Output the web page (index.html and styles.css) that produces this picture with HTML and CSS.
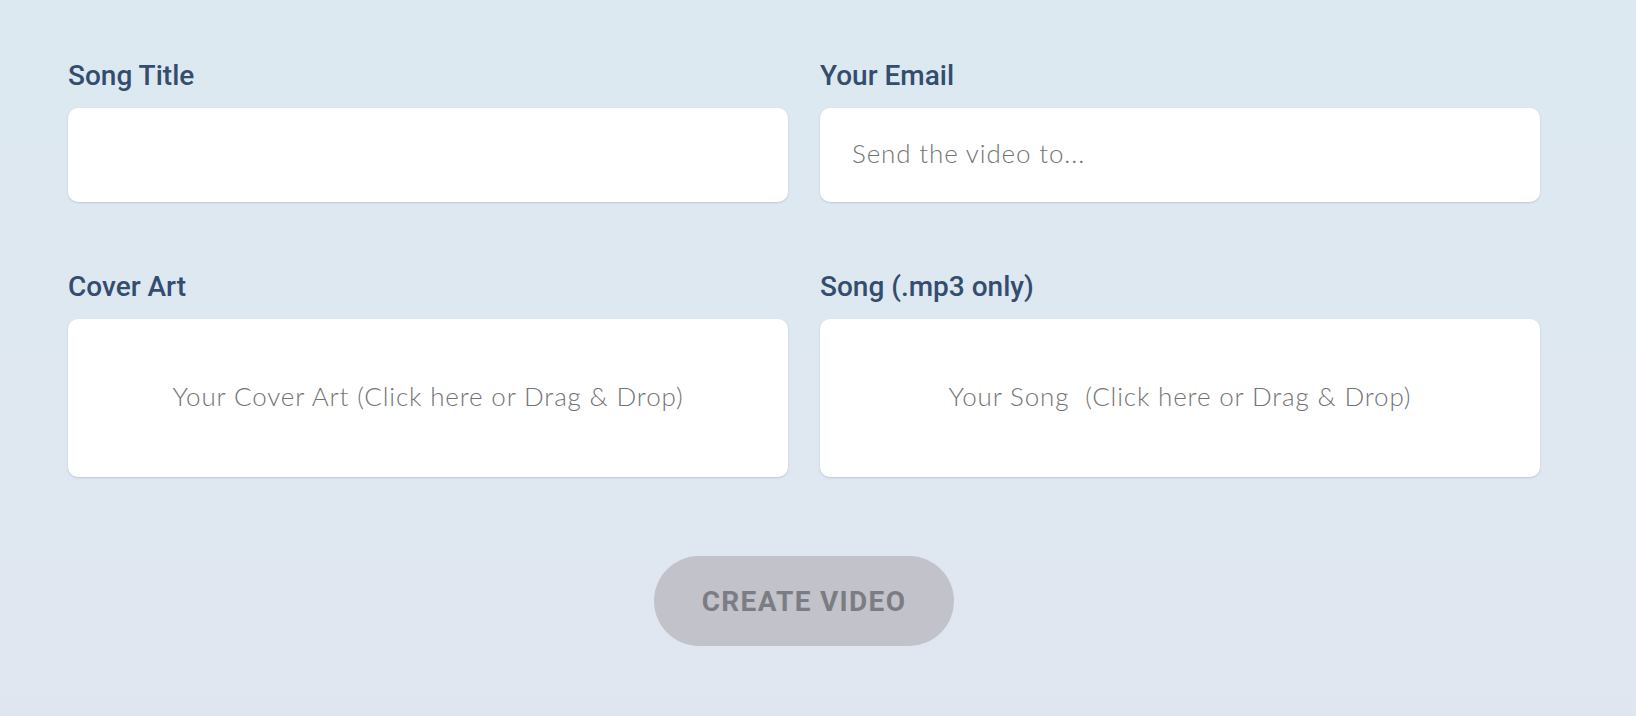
FILE: index.html
```html
<!DOCTYPE html>
<html lang="en">
<head>
<meta charset="utf-8">
<title>Create Video</title>
<link rel="stylesheet" href="styles.css">
</head>
<body>
<main class="page">
  <form class="form">
    <div class="grid">
      <div class="field">
        <label class="label" for="title">Song Title</label>
        <input class="input" id="title" type="text">
      </div>
      <div class="field">
        <label class="label" for="email">Your Email</label>
        <input class="input" id="email" type="email" placeholder="Send the video to...">
      </div>
      <div class="field">
        <span class="label">Cover Art</span>
        <div class="drop">Your Cover Art (Click here or Drag &amp; Drop)</div>
      </div>
      <div class="field">
        <span class="label">Song (.mp3 only)</span>
        <div class="drop">Your Song&nbsp; (Click here or Drag &amp; Drop)</div>
      </div>
    </div>
    <div class="actions">
      <button class="btn" type="button">CREATE VIDEO</button>
    </div>
  </form>
</main>
</body>
</html>
```

FILE: styles.css
```css
html, body {
  margin: 0;
  padding: 0;
}

body {
  min-height: 716px;
  background: linear-gradient(180deg, #dce9f1 0%, #e0e6f0 100%);
  font-family: Roboto, "Liberation Sans", sans-serif;
}

.page {
  padding: 59px 96px 0 68px;
}

.grid {
  display: grid;
  grid-template-columns: 1fr 1fr;
  column-gap: 32px;
  row-gap: 68px;
}

.field {
  display: flex;
  flex-direction: column;
}

.label {
  font-family: Roboto, "Liberation Sans", sans-serif;
  font-weight: 500;
  font-size: 28px;
  line-height: 34px;
  color: #344d6e;
  margin-bottom: 15px;
}

.input,
.drop {
  box-sizing: border-box;
  background: #fff;
  border: none;
  border-radius: 10px;
  box-shadow: 0 1px 2px rgba(90, 110, 140, 0.25);
  font-family: Lato, "Open Sans", sans-serif;
  font-weight: 300;
  font-size: 26px;
  letter-spacing: 0.85px;
  color: #747474;
}

.input {
  height: 94px;
  padding: 0 32px 5px;
  outline: none;
}

.input::placeholder {
  color: #747474;
  opacity: 1;
}

.drop {
  height: 158px;
  padding-bottom: 4px;
  display: flex;
  align-items: center;
  justify-content: center;
}

.actions {
  display: flex;
  justify-content: center;
  padding-top: 79px;
}

.btn {
  width: 300px;
  height: 90px;
  border: none;
  border-radius: 45px;
  background: #c1c2ca;
  color: #7c7d82;
  font-family: Roboto, "Liberation Sans", sans-serif;
  font-weight: 700;
  font-size: 28px;
  letter-spacing: 1.3px;
  cursor: pointer;
}
```
